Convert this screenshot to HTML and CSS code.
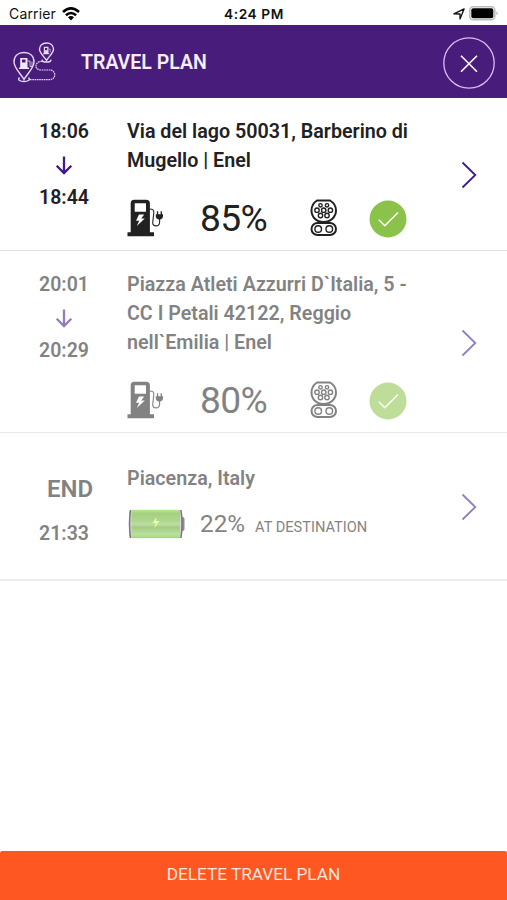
FILE: index.html
```html
<!DOCTYPE html>
<html lang="en">
<head>
<meta charset="utf-8">
<title>Travel Plan</title>
<link rel="stylesheet" href="styles.css">
</head>
<body>
<svg class="defs" aria-hidden="true">
  <symbol id="arrow" viewBox="0 0 18 20"><path d="M9 1.500V18M1.700 10.700l7.300 7.300 7.300-7.300" fill="none" stroke="currentColor" stroke-width="2.300"/></symbol>
  <symbol id="chevron" viewBox="0 0 16 28"><path d="M1.500 1.500L14.300 14 1.500 26.500" fill="none" stroke="currentColor" stroke-width="1.800"/></symbol>
  <symbol id="pump" viewBox="0 0 37 38">
    <path fill-rule="evenodd" fill="currentColor" d="M.5 37.300v-4h3.200V4.300Q3.700 .8 7.200 .8h12Q22.900 .8 22.900 4.300v29H27v4zM7.700 4.300v8.500h11.300V4.300zM12 15.500L9 21.800h3.200L9.800 27l8-7.500h-3.600l3-4z"/>
    <path d="M22.500 10c3.500 .2 4.500 1 4.300 4l-1.100 9.500c0 4.500 6.500 4.500 6.900 0v-4" fill="none" stroke="currentColor" stroke-width="1.100"/>
    <path d="M28.800 15.300h7.200v2q0 3-3.600 3.300-3.600-.3-3.600-3.300zM29.900 12.300h1.300v3.500h-1.300zM33.600 12.300h1.300v3.500h-1.300z" fill="currentColor"/>
  </symbol>
  <symbol id="connector" viewBox="0 0 28 38">
    <g fill="none" stroke="currentColor" stroke-width="2">
      <path d="M7 1.500h13Q26 5 26 11.500C26 18 20.500 23 13.500 23S1.500 18 1.500 11.500Q1.500 5 7 1.500z"/>
      <rect x="1.500" y="24" width="24.500" height="12" rx="6"/>
    </g>
    <g fill="none" stroke="currentColor" stroke-width="1.400">
      <circle cx="10.500" cy="6.300" r="1.700"/><circle cx="17" cy="6.300" r="1.700"/>
      <circle cx="7" cy="11.200" r="2.200"/><circle cx="13.700" cy="11.200" r="2.200"/><circle cx="20.400" cy="11.200" r="2.200"/>
      <circle cx="10.500" cy="16.500" r="2.200"/><circle cx="17" cy="16.500" r="2.200"/>
      <circle cx="8.200" cy="30" r="3.300"/><circle cx="19.300" cy="30" r="3.300"/>
    </g>
  </symbol>
  <symbol id="check" viewBox="0 0 38 38"><circle cx="19" cy="19" r="18.500" fill="#8bc34a"/><path d="M9.800 19.700l6 6L29 12.500" fill="none" stroke="#fff" stroke-width="1.500"/></symbol>
</svg>

<div class="status">
  <div class="network"><span class="carrier">Carrier</span>
  <svg class="wifi" viewBox="0 0 18 14"><path d="M1 5Q9-2.200 17 5M3.900 8.200Q9 3.700 14.100 8.200" fill="none" stroke="#000" stroke-width="2.500"/><path d="M6 10.300Q9 7.800 12 10.300L9 13.500z"/></svg></div>
  <span class="clock">4:24 PM</span>
  <div class="power"><svg class="location" viewBox="0 0 12 12"><path d="M.9 5.900L11.100 .9 7 11V6z" fill="none" stroke="#111" stroke-width="1.300" stroke-linejoin="round"/></svg>
  <svg class="cell" viewBox="0 0 30 15"><rect x=".8" y=".8" width="25" height="13" rx="3.500" fill="#fff" stroke="#bbb" stroke-width="1.500"/><rect x="2.300" y="2.300" width="22" height="10" rx="2"/><path d="M27.500 5.300q2.500 2 0 4z" fill="#aaa"/></svg></div>
</div>

<header class="bar">
  <svg class="route" viewBox="0 0 44 42">
    <g fill="none" stroke="#e6daf5" stroke-width="1.400">
      <path d="M11 37.500C8 32 1 26 1 20 1 14 5 10.500 11 10.500s10 3.500 10 9.500C21 26 14 32 11 37.500z"/>
      <path d="M33.500 18.500C31.500 15 26.500 11 26.500 7.300 26.500 3.500 29.300 1 33.500 1s7 2.500 7 6.300c0 3.700-5 7.700-7 11.200z"/>
      <path d="M6.500 35.500c-5 5.300 14 5.300 9 0M29.500 17.800c-2.500 3 10.500 3 8 0"/>
      <path d="M17 37.700h19.500c7 0 7-9.700 0-9.700H28c-7 0-7-8.700 1.500-8.700" stroke-dasharray="1.600 .7" stroke-width="1.200"/>
    </g>
    <path fill-rule="evenodd" fill="#f1e9fa" d="M6 25.500h1.200V16h7.300v9.500H16V27H6zM9 17.500v3h3.500v-3z"/>
    <path d="M14.500 19h2.500v5.500h2V19.500" fill="none" stroke="#d9c8ee" stroke-width=".9"/>
    <path fill-rule="evenodd" fill="#e6daf5" d="M30 11.300h.8V4.800h4.700v6.500h.8v1H30zM32 6v2.200h2.200V6z"/>
    <path d="M35.500 7h1.700v3.500" fill="none" stroke="#d9c8ee" stroke-width=".7"/>
  </svg>
  <h1 class="title">TRAVEL PLAN</h1>
  <svg class="close" viewBox="0 0 52 52"><circle cx="26" cy="26" r="25.200" fill="none" stroke="#d9bdf2" stroke-width="1.300"/><path d="M18 18.800l16 16M34 18.800l-16 16" stroke="#fff" stroke-width="1.600"/></svg>
</header>

<main class="stops">
  <section class="stop">
    <div class="times"><span>18:06</span><svg class="arrow"><use href="#arrow"/></svg><span>18:44</span></div>
    <div class="info">
      <p class="place">Via del lago 50031, Barberino di<br>Mugello | Enel</p>
      <div class="charge"><svg class="pump"><use href="#pump"/></svg><span class="percent">85%</span><svg class="connector"><use href="#connector"/></svg><svg class="check"><use href="#check"/></svg></div>
    </div>
    <svg class="chevron"><use href="#chevron"/></svg>
  </section>
  <section class="stop later">
    <div class="times"><span>20:01</span><svg class="arrow"><use href="#arrow"/></svg><span>20:29</span></div>
    <div class="info">
      <p class="place">Piazza Atleti Azzurri D`Italia, 5 -<br>CC I Petali 42122, Reggio<br>nell`Emilia | Enel</p>
      <div class="charge"><svg class="pump"><use href="#pump"/></svg><span class="percent">80%</span><svg class="connector"><use href="#connector"/></svg><svg class="check"><use href="#check"/></svg></div>
    </div>
    <svg class="chevron"><use href="#chevron"/></svg>
  </section>
  <section class="stop later end">
    <div class="times"><strong class="end-label">END</strong><span>21:33</span></div>
    <div class="info">
      <p class="place">Piacenza, Italy</p>
      <div class="arrival">
        <svg class="battery" viewBox="0 0 57 30">
          <defs><linearGradient id="green" x2="0" y2="1"><stop offset="0" stop-color="#83d435"/><stop offset=".12" stop-color="#5fad1d"/><stop offset=".4" stop-color="#72b53a"/><stop offset=".5" stop-color="#8fc45c"/><stop offset=".63" stop-color="#5da51e"/><stop offset=".86" stop-color="#87c955"/><stop offset="1" stop-color="#51c40b"/></linearGradient></defs>
          <rect x="52" y="8" width="4.500" height="14" rx="2" fill="#333"/>
          <rect x="1" y=".8" width="53" height="28.400" rx="3" fill="#b8b8b8"/>
          <path d="M2.500 1Q.5 15 2.500 29M53 1q2 14 0 28" fill="none" stroke="#111" stroke-width="1.500"/>
          <rect x="3.500" y="1" width="48.500" height="28" rx="1" fill="url(#green)"/>
          <path d="M28.500 8l-4 6h3l-1 5 5-7H28z" fill="#d5ff61"/>
        </svg>
        <span class="remaining">22%</span><span class="caption">AT DESTINATION</span>
      </div>
    </div>
    <svg class="chevron"><use href="#chevron"/></svg>
  </section>
</main>

<button class="delete">DELETE TRAVEL PLAN</button>
</body>
</html>
```
FILE: styles.css
```css
* { box-sizing: border-box; }
body {
  margin: 0;
  height: 900px;
  display: flex;
  flex-direction: column;
  background: #fff;
  color: #212121;
  font-family: Roboto, sans-serif;
  overflow: hidden;
}
svg { display: block; flex: none; }
.defs { width: 0; height: 0; position: absolute; }

.status {
  height: 25px;
  display: grid;
  grid-template-columns: 1fr auto 1fr;
  align-items: center;
  padding: 2px 8px 0 9px;
  font-family: Inter, sans-serif;
  font-size: 14px;
  color: #111;
}
.network, .power { display: flex; align-items: center; }
.carrier { width: 53px; letter-spacing: .15px; }
.wifi { width: 18px; height: 14px; }
.clock { font-weight: 600; font-size: 13.700px; letter-spacing: .6px; }
.power { justify-content: flex-end; }
.location { width: 12px; height: 12px; }
.cell { width: 30px; height: 15px; margin: -1px 0 0 4px; }

.bar {
  height: 73px;
  display: flex;
  align-items: center;
  padding: 2px 12px 0 13px;
  background: #481c7b;
}
.route { width: 44px; height: 42px; margin-top: 1px; }
.title {
  flex: 1;
  margin: 0 0 1px 24px;
  color: #f5eefb;
  font-size: 19.500px;
  font-weight: 600;
}
.close { width: 52px; height: 52px; }

.stop {
  height: 153px;
  display: grid;
  grid-template-columns: 128px 333px 15px;
  align-items: start;
  border-bottom: 1px solid #dedede;
}
.later { height: 182px; border-bottom-color: #e9e9e9; }
.later > * { opacity: .56; }
.end { height: 148px; border-bottom: 2px solid #ececec; }
.times {
  display: flex;
  flex-direction: column;
  align-items: center;
  padding-top: 19px;
  font-size: 19.500px;
  font-weight: 600;
  line-height: 30px;
}
.arrow { width: 18px; height: 20px; margin: 8px 0; color: #42188a; }
.info { padding-top: 19px; margin-left: -1px; }
.place {
  margin: 0;
  font-size: 19.700px;
  font-weight: 600;
  line-height: 29.200px;
  white-space: nowrap;
}
.charge {
  display: grid;
  grid-template-columns: 73px 110px 59px 38px;
  align-items: center;
  height: 44px;
  margin-top: 20.500px;
}
.pump { width: 37px; height: 38px; }
.percent { font-size: 37.200px; line-height: 44px; letter-spacing: -.6px; }
.connector { width: 28px; height: 38px; }
.check { width: 38px; height: 38px; margin-top: 2px; }
.chevron { width: 16px; height: 28px; align-self: center; margin-top: 2px; color: #3d1a8c; }
.end .times { padding-top: 41px; }
.end-label { margin-left: 12px; margin-bottom: 15px; font-size: 24px; font-weight: 600; }
.end .info { padding-top: 31px; }
.arrival { display: flex; align-items: center; height: 30px; margin: 15.500px 0 0 1px; }
.battery { width: 57px; height: 30px; }
.remaining { margin-left: 15px; font-size: 24.300px; }
.caption { margin: 7px 0 0 10px; font-size: 14.600px; }

.delete {
  height: 49px;
  margin-top: auto;
  padding: 0 0 3px;
  border: 0;
  border-radius: 2px 2px 0 0;
  background: #ff5722;
  color: #ffe8df;
  font: 400 17.200px Roboto, sans-serif;
}
```
